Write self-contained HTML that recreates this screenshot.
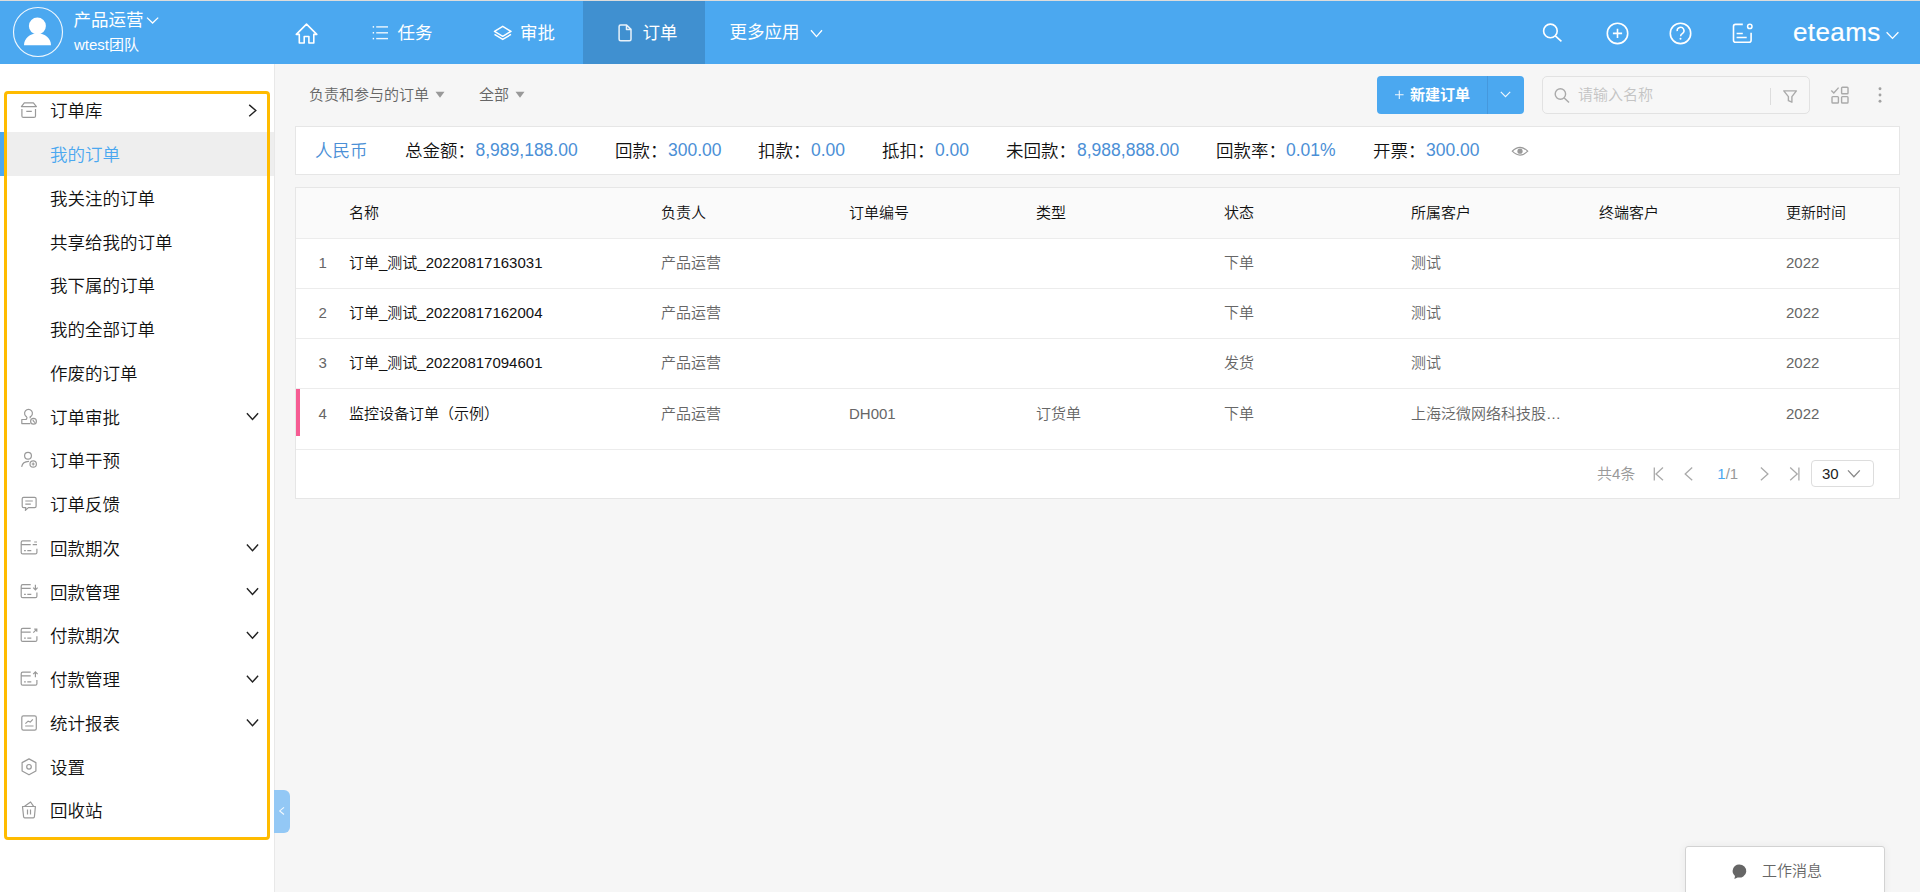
<!DOCTYPE html>
<html lang="zh-CN">
<head>
<meta charset="utf-8">
<title>订单 - eteams</title>
<style>
*{box-sizing:border-box;margin:0;padding:0}
html,body{width:1920px;height:892px;overflow:hidden}
body{background:#f6f6f6;font-family:"Liberation Sans","Noto Sans CJK SC",sans-serif;color:#111;position:relative;font-weight:350}
.abs{position:absolute}
svg{display:block;overflow:visible;position:absolute;left:0;top:0}
.t{position:absolute;white-space:nowrap;line-height:1}
#topline{left:0;top:0;width:1920px;height:1px;background:#dddcdb}
#header{left:0;top:1px;width:1920px;height:63px;background:#4ba8f0}
#tabactive{left:583px;top:1px;width:122px;height:63px;background:#4090d0}
#sidebar{left:0;top:64px;width:274px;height:828px;background:#fff}
#sideborder{left:274px;top:64px;width:1px;height:828px;background:#e8e8e8}
#activebg{left:0;top:132px;width:274px;height:44px;background:#eeeeee}
#activebar{left:0;top:132px;width:4px;height:44px;background:#4ba8f0}
#hl{left:4px;top:91px;width:266px;height:749px;border:3px solid #ffbb00;border-radius:4px}
#collapse{left:274px;top:790px;width:16px;height:42.5px;background:#93c8f5;border-radius:0 6px 6px 0}
#newbtn{left:1377px;top:76px;width:147px;height:38px;background:#4ba8f0;border-radius:4px}
#newdiv{left:1487px;top:76px;width:1px;height:38px;background:#4598dd}
#search{left:1542px;top:76px;width:268px;height:38px;border:1px solid #e2e2e2;border-radius:5px;background:#f7f7f7}
#sdiv{left:1770px;top:88px;width:1px;height:17px;background:#ddd}
.card{background:#fff;border:1px solid #e6e6e6}
#sum{left:295px;top:126px;width:1605px;height:49px}
#tbl{left:295px;top:187px;width:1605px;height:312px}
#thead{left:296px;top:188px;width:1603px;height:50px;background:#fafafa}
.hline{position:absolute;left:296px;width:1603px;height:1px;background:#ececec}
#pinkbar{left:296px;top:389px;width:4px;height:47px;background:#f65c93}
#psel{left:1811px;top:460px;width:63px;height:27px;border:1px solid #ddd;border-radius:4px;background:#fff}
#msg{left:1685px;top:846px;width:200px;height:50px;border:1px solid #d2d2d2;border-radius:3px;background:#fff;box-shadow:0 0 8px rgba(0,0,0,.06)}
.w{color:#fff;font-weight:400}
.b{font-weight:bold}
</style>
</head>
<body>
<div class="abs" id="topline"></div>
<div class="abs" id="header"></div>
<div class="abs" id="tabactive"></div>
<div class="abs" id="sidebar"></div>
<div class="abs" id="sideborder"></div>
<div class="abs" id="activebg"></div>
<div class="abs" id="activebar"></div>
<div class="t w" style="left:73.6px;top:12.05px;font-size:17.5px;">产品运营</div>
<div class="t w" style="left:74px;top:37.30px;font-size:15px;">wtest团队</div>
<div class="t w" style="left:397.6px;top:25.05px;font-size:17.5px;">任务</div>
<div class="t w" style="left:520px;top:25.05px;font-size:17.5px;">审批</div>
<div class="t w" style="left:642.5px;top:25.05px;font-size:17.5px;">订单</div>
<div class="t w" style="left:729.4px;top:24.05px;font-size:17.5px;">更多应用</div>
<div class="t w" style="left:1793px;top:18.90px;font-size:26px;letter-spacing:0.4px;-webkit-text-stroke:0.2px #fff;">eteams</div>
<div class="t " style="left:50px;top:103.35px;font-size:17.5px;color:#111;">订单库</div>
<div class="t " style="left:50px;top:147.10px;font-size:17.5px;color:#4ba8f0;">我的订单</div>
<div class="t " style="left:50px;top:190.85px;font-size:17.5px;color:#111;">我关注的订单</div>
<div class="t " style="left:50px;top:234.60px;font-size:17.5px;color:#111;">共享给我的订单</div>
<div class="t " style="left:50px;top:278.35px;font-size:17.5px;color:#111;">我下属的订单</div>
<div class="t " style="left:50px;top:322.10px;font-size:17.5px;color:#111;">我的全部订单</div>
<div class="t " style="left:50px;top:365.85px;font-size:17.5px;color:#111;">作废的订单</div>
<div class="t " style="left:50px;top:409.60px;font-size:17.5px;color:#111;">订单审批</div>
<div class="t " style="left:50px;top:453.35px;font-size:17.5px;color:#111;">订单干预</div>
<div class="t " style="left:50px;top:497.10px;font-size:17.5px;color:#111;">订单反馈</div>
<div class="t " style="left:50px;top:540.85px;font-size:17.5px;color:#111;">回款期次</div>
<div class="t " style="left:50px;top:584.60px;font-size:17.5px;color:#111;">回款管理</div>
<div class="t " style="left:50px;top:628.35px;font-size:17.5px;color:#111;">付款期次</div>
<div class="t " style="left:50px;top:672.10px;font-size:17.5px;color:#111;">付款管理</div>
<div class="t " style="left:50px;top:715.85px;font-size:17.5px;color:#111;">统计报表</div>
<div class="t " style="left:50px;top:759.60px;font-size:17.5px;color:#111;">设置</div>
<div class="t " style="left:50px;top:803.35px;font-size:17.5px;color:#111;">回收站</div>
<div class="t " style="left:309px;top:86.55px;font-size:15px;color:#666;">负责和参与的订单</div>
<div class="t " style="left:479px;top:86.55px;font-size:15px;color:#666;">全部</div>
<div class="abs" id="newbtn"></div><div class="abs" id="newdiv"></div>
<div class="t w b" style="left:1410px;top:86.80px;font-size:15px;">新建订单</div>
<div class="abs" id="search"></div><div class="abs" id="sdiv"></div>
<div class="t " style="left:1578px;top:86.80px;font-size:15px;color:#c4c4c4;">请输入名称</div>
<div class="abs card" id="sum"></div>
<div class="t " style="left:315px;top:142.85px;font-size:17.5px;color:#4b8fd6;">人民币</div>
<div class="t " style="left:405px;top:142.85px;font-size:17.5px;color:#111;">总金额：</div>
<div class="t " style="left:475.5px;top:141.95px;font-size:17.5px;color:#4b8fd6;">8,989,188.00</div>
<div class="t " style="left:615px;top:142.85px;font-size:17.5px;color:#111;">回款：</div>
<div class="t " style="left:668px;top:141.95px;font-size:17.5px;color:#4b8fd6;">300.00</div>
<div class="t " style="left:758px;top:142.85px;font-size:17.5px;color:#111;">扣款：</div>
<div class="t " style="left:811px;top:141.95px;font-size:17.5px;color:#4b8fd6;">0.00</div>
<div class="t " style="left:882px;top:142.85px;font-size:17.5px;color:#111;">抵扣：</div>
<div class="t " style="left:935px;top:141.95px;font-size:17.5px;color:#4b8fd6;">0.00</div>
<div class="t " style="left:1006px;top:142.85px;font-size:17.5px;color:#111;">未回款：</div>
<div class="t " style="left:1077px;top:141.95px;font-size:17.5px;color:#4b8fd6;">8,988,888.00</div>
<div class="t " style="left:1216px;top:142.85px;font-size:17.5px;color:#111;">回款率：</div>
<div class="t " style="left:1286px;top:141.95px;font-size:17.5px;color:#4b8fd6;">0.01%</div>
<div class="t " style="left:1373px;top:142.85px;font-size:17.5px;color:#111;">开票：</div>
<div class="t " style="left:1426px;top:141.95px;font-size:17.5px;color:#4b8fd6;">300.00</div>
<div class="abs card" id="tbl"></div><div class="abs" id="thead"></div>
<div class="hline" style="top:238px"></div>
<div class="hline" style="top:288px"></div>
<div class="hline" style="top:338px"></div>
<div class="hline" style="top:388px"></div>
<div class="hline" style="top:449px"></div>
<div class="abs" id="pinkbar"></div>
<div class="t " style="left:349px;top:205.00px;font-size:15px;color:#111;">名称</div>
<div class="t " style="left:661px;top:205.00px;font-size:15px;color:#111;">负责人</div>
<div class="t " style="left:849px;top:205.00px;font-size:15px;color:#111;">订单编号</div>
<div class="t " style="left:1036px;top:205.00px;font-size:15px;color:#111;">类型</div>
<div class="t " style="left:1224px;top:205.00px;font-size:15px;color:#111;">状态</div>
<div class="t " style="left:1411px;top:205.00px;font-size:15px;color:#111;">所属客户</div>
<div class="t " style="left:1599px;top:205.00px;font-size:15px;color:#111;">终端客户</div>
<div class="t " style="left:1786px;top:205.00px;font-size:15px;color:#111;">更新时间</div>
<div class="t " style="left:318.5px;top:254.80px;font-size:15px;color:#666;">1</div>
<div class="t " style="left:349px;top:254.80px;font-size:15px;color:#111;">订单_测试_20220817163031</div>
<div class="t " style="left:661px;top:254.80px;font-size:15px;color:#666;">产品运营</div>
<div class="t " style="left:1224px;top:254.80px;font-size:15px;color:#666;">下单</div>
<div class="t " style="left:1411px;top:254.80px;font-size:15px;color:#666;">测试</div>
<div class="t " style="left:1786px;top:254.80px;font-size:15px;color:#666;">2022</div>
<div class="t " style="left:318.5px;top:304.80px;font-size:15px;color:#666;">2</div>
<div class="t " style="left:349px;top:304.80px;font-size:15px;color:#111;">订单_测试_20220817162004</div>
<div class="t " style="left:661px;top:304.80px;font-size:15px;color:#666;">产品运营</div>
<div class="t " style="left:1224px;top:304.80px;font-size:15px;color:#666;">下单</div>
<div class="t " style="left:1411px;top:304.80px;font-size:15px;color:#666;">测试</div>
<div class="t " style="left:1786px;top:304.80px;font-size:15px;color:#666;">2022</div>
<div class="t " style="left:318.5px;top:354.80px;font-size:15px;color:#666;">3</div>
<div class="t " style="left:349px;top:354.80px;font-size:15px;color:#111;">订单_测试_20220817094601</div>
<div class="t " style="left:661px;top:354.80px;font-size:15px;color:#666;">产品运营</div>
<div class="t " style="left:1224px;top:354.80px;font-size:15px;color:#666;">发货</div>
<div class="t " style="left:1411px;top:354.80px;font-size:15px;color:#666;">测试</div>
<div class="t " style="left:1786px;top:354.80px;font-size:15px;color:#666;">2022</div>
<div class="t " style="left:318.5px;top:405.80px;font-size:15px;color:#666;">4</div>
<div class="t " style="left:349px;top:405.80px;font-size:15px;color:#111;">监控设备订单（示例）</div>
<div class="t " style="left:661px;top:405.80px;font-size:15px;color:#666;">产品运营</div>
<div class="t " style="left:849px;top:405.80px;font-size:15px;color:#666;">DH001</div>
<div class="t " style="left:1036px;top:405.80px;font-size:15px;color:#666;">订货单</div>
<div class="t " style="left:1224px;top:405.80px;font-size:15px;color:#666;">下单</div>
<div class="t " style="left:1411px;top:405.80px;font-size:15px;color:#666;">上海泛微网络科技股…</div>
<div class="t " style="left:1786px;top:405.80px;font-size:15px;color:#666;">2022</div>
<div class="t " style="left:1597px;top:465.80px;font-size:15px;color:#999;">共4条</div>
<div class="t " style="left:1717.3px;top:465.80px;font-size:15px;color:#999;"><span style="color:#4ba8f0">1</span>/1</div>
<div class="abs" id="psel"></div>
<div class="t " style="left:1822px;top:465.80px;font-size:15px;color:#222;">30</div>
<div class="abs" id="msg"></div>
<div class="t " style="left:1762px;top:862.80px;font-size:15px;color:#666;">工作消息</div>
<div class="abs" id="collapse"></div>
<svg width="1920" height="892" viewBox="0 0 1920 892">
<circle cx="38" cy="32" r="24.5" fill="none" stroke="#fff" stroke-width="1.15" opacity=".9"/>
<circle cx="37.4" cy="26" r="8.5" fill="#fff"/>
<path d="M24 45.2C24 38.5 30 33.2 37.5 33.2C45 33.2 51 38.5 51 45.2Z" fill="#fff"/>
<polyline points="147,17.6 152.6,23 158.2,17.6" fill="none" stroke="#fff" stroke-width="1.3"/>
<path d="M296.3 34.4L306.5 24.1L316.8 34.4H313.8V43H308.9V36.5H304.2V43H299.3V34.4Z" fill="none" stroke="#fff" stroke-width="1.6" stroke-linejoin="round"/>
<line x1="372.7" y1="26.9" x2="374.1" y2="26.9" fill="none" stroke="#fff" stroke-width="1.5"/>
<line x1="376.2" y1="26.9" x2="388" y2="26.9" fill="none" stroke="#fff" stroke-width="1.4" opacity=".9"/>
<line x1="372.7" y1="32.8" x2="374.1" y2="32.8" fill="none" stroke="#fff" stroke-width="1.5"/>
<line x1="376.2" y1="32.8" x2="388" y2="32.8" fill="none" stroke="#fff" stroke-width="1.4" opacity=".9"/>
<line x1="372.7" y1="38.6" x2="374.1" y2="38.6" fill="none" stroke="#fff" stroke-width="1.5"/>
<line x1="376.2" y1="38.6" x2="388" y2="38.6" fill="none" stroke="#fff" stroke-width="1.4" opacity=".9"/>
<path d="M502.75 26.3L511 31.4L502.75 36.3L494.5 31.4Z" fill="none" stroke="#fff" stroke-width="1.5" stroke-linejoin="round"/>
<polyline points="494.5,34.4 502.75,39.4 511,34.4" fill="none" stroke="#fff" stroke-width="1.5" stroke-linejoin="round"/>
<path d="M620.6 25H626.6L631 29.4V39.2Q631 40.7 629.5 40.7H620.6Q619.1 40.7 619.1 39.2V26.5Q619.1 25 620.6 25ZM626.5 25V29.4H631" fill="none" stroke="#fff" stroke-width="1.5" opacity=".88" stroke-linejoin="round"/>
<polyline points="811,30.3 816.5,36.6 822,30.3" fill="none" stroke="#fff" stroke-width="1.3"/>
<circle cx="1550.4" cy="30.9" r="6.8" fill="none" stroke="#fff" stroke-width="1.6"/>
<line x1="1555.3" y1="35.8" x2="1561.4" y2="41.4" fill="none" stroke="#fff" stroke-width="1.6"/>
<circle cx="1617.5" cy="33.4" r="10.2" fill="none" stroke="#fff" stroke-width="1.6"/>
<path d="M1612.9 33.4H1622.1M1617.5 28.8V38" fill="none" stroke="#fff" stroke-width="1.6"/>
<circle cx="1680.5" cy="33.4" r="10.2" fill="none" stroke="#fff" stroke-width="1.6"/>
<path d="M1677.2 31.2A3.4 3.4 0 1 1 1682.6 33.4Q1680.6 34.7 1680.6 36.2" fill="none" stroke="#fff" stroke-width="1.5"/>
<circle cx="1680.5" cy="38.7" r="1" fill="#fff"/>
<path d="M1742.8 24.4H1735.5Q1733.5 24.4 1733.5 26.4V40.2Q1733.5 42.2 1735.5 42.2H1749.1Q1751.1 42.2 1751.1 40.2V32.8" fill="none" stroke="#fff" stroke-width="1.6"/>
<circle cx="1749.8" cy="26.4" r="2.2" fill="none" stroke="#fff" stroke-width="1.5"/>
<path d="M1736.6 33.5H1742.8M1736.6 37.4H1746.7" fill="none" stroke="#fff" stroke-width="1.5"/>
<polyline points="1886.6,32.3 1892.5,38.4 1898.4,32.3" fill="none" stroke="#fff" stroke-width="1.3"/>
<path d="M21.4 106.6L24.3 102.9H33.4L36.4 106.6ZM21.9 108.9V115.9Q21.9 117.4 23.4 117.4H34Q35.5 117.4 35.5 115.9V108.9M26.3 111.4H31.8" fill="none" stroke="#999" stroke-width="1.2" stroke-linejoin="round"/>
<path d="M26.9 416.9A3.9 3.9 0 1 1 30.1 416.9Q30.2 417.8 30.4 418.3M26.9 416.9Q27 419.5 25.5 419.5H21.8V423.6H30.3" fill="none" stroke="#999" stroke-width="1.2" stroke-linejoin="round"/>
<circle cx="33.5" cy="421.2" r="2.9" fill="none" stroke="#999" stroke-width="1.2"/><path d="M33.5 421.2L32.9 419.6M33.5 421.2L34.9 422.6" fill="none" stroke="#999" stroke-width="1.2" stroke-width="1"/>
<circle cx="28" cy="455.8" r="3.4" fill="none" stroke="#999" stroke-width="1.2"/><path d="M21.8 466.4Q22.6 461.6 28.6 461.3" fill="none" stroke="#999" stroke-width="1.2" stroke-linecap="round"/>
<circle cx="33.2" cy="464" r="3.2" fill="none" stroke="#999" stroke-width="1.2"/><path d="M31.7 464H34.7M33.2 462.5V465.5" fill="none" stroke="#999" stroke-width="1.2" stroke-width="1"/>
<path d="M23.6 497.4H34.7Q36.1 497.4 36.1 498.8V506.2Q36.1 507.6 34.7 507.6H28.4L25.4 510.4L25.8 507.6H23.6Q22.2 507.6 22.2 506.2V498.8Q22.2 497.4 23.6 497.4Z" fill="none" stroke="#999" stroke-width="1.2" stroke-linejoin="round"/>
<path d="M25.3 501H32.8M25.3 504.1H30.8" fill="none" stroke="#999" stroke-width="1.2"/>
<path d="M30.7 540.90H22.7Q21.2 540.90 21.2 542.40V552.40Q21.2 553.90 22.7 553.90H35.4Q36.9 553.90 36.9 552.40V548.70M21.2 544.60H30.7" fill="none" stroke="#999" stroke-width="1.2"/><path d="M24.1 550.70H25.8M27.3 550.70H31.3" fill="none" stroke="#999" stroke-width="1.2" stroke-width="1"/>
<path d="M32.7 544.60H37M34.2 542.00H37" fill="none" stroke="#999" stroke-width="1.2"/>
<path d="M30.7 584.65H22.7Q21.2 584.65 21.2 586.15V596.15Q21.2 597.65 22.7 597.65H35.4Q36.9 597.65 36.9 596.15V592.45M21.2 588.35H30.7" fill="none" stroke="#999" stroke-width="1.2"/><path d="M24.1 594.45H25.8M27.3 594.45H31.3" fill="none" stroke="#999" stroke-width="1.2" stroke-width="1"/>
<path d="M35.4 584.65V589.85M33.2 587.65L35.4 589.95L37.6 587.65" fill="none" stroke="#999" stroke-width="1.2"/>
<path d="M30.7 628.40H22.7Q21.2 628.40 21.2 629.90V639.90Q21.2 641.40 22.7 641.40H35.4Q36.9 641.40 36.9 639.90V636.20M21.2 632.10H30.7" fill="none" stroke="#999" stroke-width="1.2"/><path d="M24.1 638.20H25.8M27.3 638.20H31.3" fill="none" stroke="#999" stroke-width="1.2" stroke-width="1"/>
<path d="M33.3 632.60L36.6 629.30M34.2 629.10H36.8V631.70" fill="none" stroke="#999" stroke-width="1.2"/>
<path d="M30.7 672.15H22.7Q21.2 672.15 21.2 673.65V683.65Q21.2 685.15 22.7 685.15H35.4Q36.9 685.15 36.9 683.65V679.95M21.2 675.85H30.7" fill="none" stroke="#999" stroke-width="1.2"/><path d="M24.1 681.95H25.8M27.3 681.95H31.3" fill="none" stroke="#999" stroke-width="1.2" stroke-width="1"/>
<path d="M35.4 671.95V677.15M33.2 674.15L35.4 671.85L37.6 674.15" fill="none" stroke="#999" stroke-width="1.2"/>
<rect x="21.8" y="715.8" width="14.5" height="14.3" rx="1.6" fill="none" stroke="#999" stroke-width="1.2"/>
<path d="M25.4 723.6L28.1 721.1L30.3 722.1L32.8 719.3M25.2 726H33.5" fill="none" stroke="#999" stroke-width="1.2"/>
<path d="M29 758.9L35.9 762.6V771L29 774.8L22.1 771V762.6Z" fill="none" stroke="#999" stroke-width="1.2" stroke-linejoin="round"/><circle cx="29" cy="766.8" r="2.3" fill="none" stroke="#999" stroke-width="1.2"/>
<path d="M22.5 806.5H35.4L34.4 816.8Q34.3 817.8 33.3 817.8H24.7Q23.7 817.8 23.6 816.8ZM24.6 806.3L30.6 802L33.6 806.3M27.5 809.5V814.5M30.5 809.5V814.5" fill="none" stroke="#999" stroke-width="1.2" stroke-linejoin="round"/>
<polyline points="249.2,104.9 255.8,110.5 249.2,116.2" fill="none" stroke="#222" stroke-width="1.4"/>
<polyline points="246.9,413.30 252.5,419.50 258.1,413.30" fill="none" stroke="#222" stroke-width="1.4"/>
<polyline points="246.9,544.55 252.5,550.75 258.1,544.55" fill="none" stroke="#222" stroke-width="1.4"/>
<polyline points="246.9,588.30 252.5,594.50 258.1,588.30" fill="none" stroke="#222" stroke-width="1.4"/>
<polyline points="246.9,632.05 252.5,638.25 258.1,632.05" fill="none" stroke="#222" stroke-width="1.4"/>
<polyline points="246.9,675.80 252.5,682.00 258.1,675.80" fill="none" stroke="#222" stroke-width="1.4"/>
<polyline points="246.9,719.55 252.5,725.75 258.1,719.55" fill="none" stroke="#222" stroke-width="1.4"/>
<polyline points="284,807.3 279.7,810.9 284,814.5" fill="none" stroke="#fff" stroke-width="1.1" opacity=".9"/>
<path d="M435.5 91.8H444.5L440 97.8Z" fill="#999"/>
<path d="M515.5 91.8H524.5L520 97.8Z" fill="#999"/>
<path d="M1395 94.7H1403.6M1399.3 90.4V99" fill="none" stroke="#fff" stroke-width="1.1" opacity=".9"/>
<polyline points="1500.8,91.9 1505.5,96.7 1510.2,91.9" fill="none" stroke="#fff" stroke-width="1.2" opacity=".9"/>
<circle cx="1560.4" cy="94" r="5.2" fill="none" stroke="#aaa" stroke-width="1.4"/><line x1="1564.2" y1="97.9" x2="1569" y2="102.5" fill="none" stroke="#aaa" stroke-width="1.4"/>
<path d="M1783.8 90.9H1796.4L1791.9 96.6V102.2L1788.4 100.7V96.6Z" fill="none" stroke="#aaa" stroke-width="1.4" stroke-width="1.3" stroke-linejoin="round"/>
<rect x="1841.6" y="87.3" width="6.4" height="6.4" rx=".8" fill="none" stroke="#aaa" stroke-width="1.4" stroke-width="1.5"/><rect x="1832" y="96.6" width="6.4" height="6.4" rx=".8" fill="none" stroke="#aaa" stroke-width="1.4" stroke-width="1.5"/><rect x="1841.6" y="96.6" width="6.4" height="6.4" rx=".8" fill="none" stroke="#aaa" stroke-width="1.4" stroke-width="1.5"/><polyline points="1831.3,90.6 1833.8,93 1838.6,87.6" fill="none" stroke="#aaa" stroke-width="1.4" stroke-width="1.5"/>
<circle cx="1880" cy="88.8" r="1.45" fill="#a2a2a2"/>
<circle cx="1880" cy="95" r="1.45" fill="#a2a2a2"/>
<circle cx="1880" cy="101.2" r="1.45" fill="#a2a2a2"/>
<path d="M1512.3 151.2Q1520 143.4 1527.7 151.2Q1520 159 1512.3 151.2Z" fill="none" stroke="#999" stroke-width="1.2"/><circle cx="1520" cy="151.2" r="2.6" fill="#999"/>
<path d="M1654.3 467.4V480.4M1663 467.6L1656 473.9L1663 480.2" fill="none" stroke="#aaa" stroke-width="1.3"/>
<polyline points="1692.2,467.6 1685.2,473.9 1692.2,480.2" fill="none" stroke="#aaa" stroke-width="1.3"/>
<polyline points="1760.9,467.6 1767.9,473.9 1760.9,480.2" fill="none" stroke="#aaa" stroke-width="1.3"/>
<path d="M1798.9 467.4V480.4M1790.2 467.6L1797.2 473.9L1790.2 480.2" fill="none" stroke="#aaa" stroke-width="1.3"/>
<polyline points="1848,470.4 1853.9,476.8 1859.8,470.4" fill="none" stroke="#888" stroke-width="1.3"/>
<path d="M1739 864.4A7 6.6 0 1 1 1737.6 877.4L1734.4 879L1735 876A6.6 6.6 0 0 1 1739 864.4Z" fill="#666"/>
</svg>
<div class="abs" id="hl"></div>
</body>
</html>
